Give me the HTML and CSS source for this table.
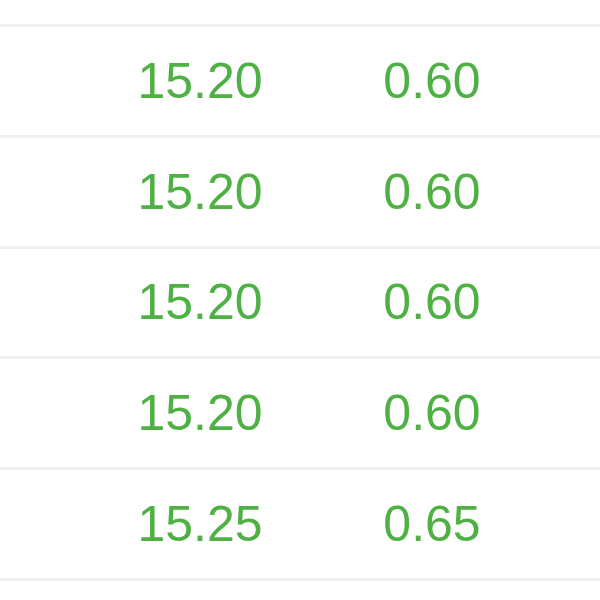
FILE: index.html
```html
<!DOCTYPE html>
<html>
<head>
<meta charset="utf-8">
<link rel="stylesheet" href="styles.css">
</head>
<body>
<div class="table">
  <div class="row"><span class="cell price">15.20</span><span class="cell change">0.60</span></div>
  <div class="row"><span class="cell price">15.20</span><span class="cell change">0.60</span></div>
  <div class="row"><span class="cell price">15.20</span><span class="cell change">0.60</span></div>
  <div class="row"><span class="cell price">15.20</span><span class="cell change">0.60</span></div>
  <div class="row"><span class="cell price">15.25</span><span class="cell change">0.65</span></div>
</div>
</body>
</html>
```
FILE: styles.css
```css
html, body {
  margin: 0;
  padding: 0;
  background: #ffffff;
}
body {
  font-family: "Liberation Sans", Arial, sans-serif;
  overflow: hidden;
}
.table {
  margin-top: 24px;
  border-bottom: 3px solid #efefef;
}
.row {
  display: grid;
  grid-template-columns: 100px 200px 264px;
  align-items: center;
  box-sizing: border-box;
  height: 110.8px;
  border-top: 3px solid #efefef;
}
.cell {
  font-size: 50px;
  color: #4fb044;
  text-align: center;
  line-height: 1;
}
.price { grid-column: 2; }
.change { grid-column: 3; }
```
